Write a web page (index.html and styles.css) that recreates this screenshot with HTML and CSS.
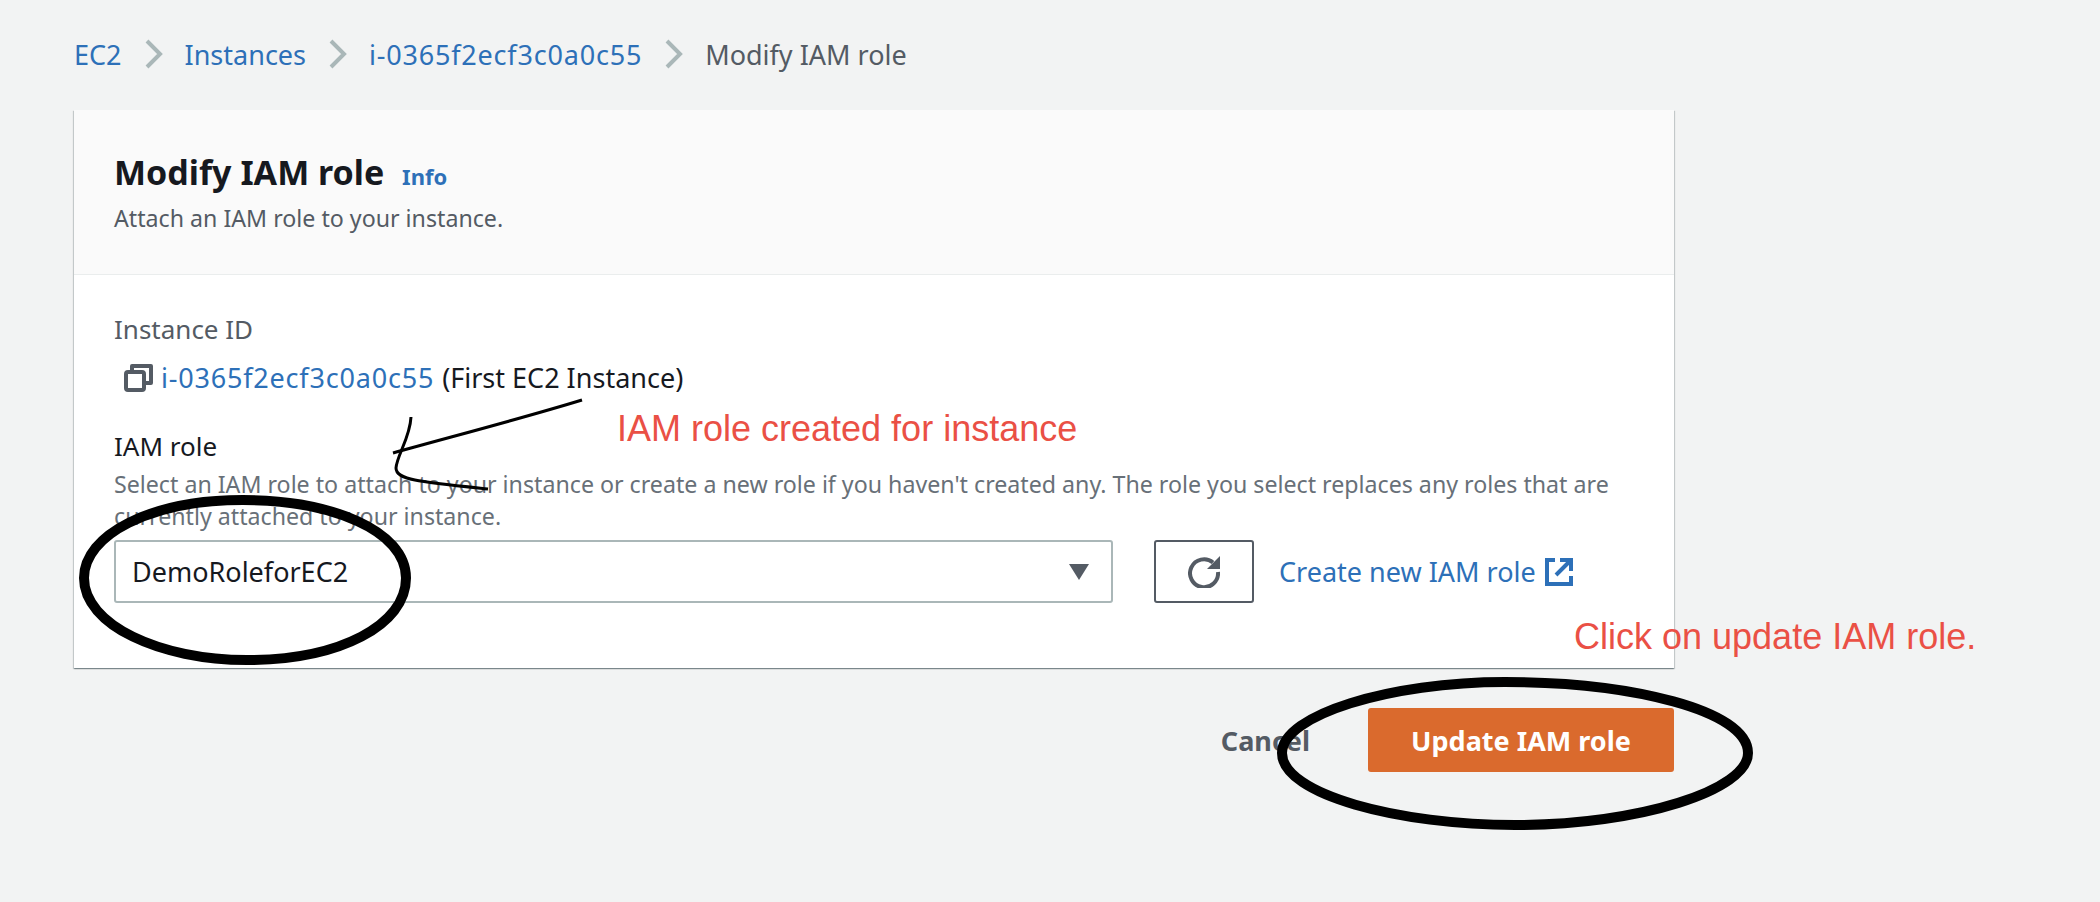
FILE: index.html
```html
<!DOCTYPE html>
<html lang="en">
  <head>
    <meta charset="UTF-8" />
    <title>Modify IAM role</title>
    <link rel="stylesheet" href="styles.css">
  </head>
  <body>
    <nav class="crumbs">
      <a href="#">EC2</a>
      <svg class="chevron" viewBox="0 0 19 30"><path d="M3 2l13 13L3 28" /></svg>
      <a href="#">Instances</a>
      <svg class="chevron" viewBox="0 0 19 30"><path d="M3 2l13 13L3 28" /></svg>
      <a href="#" class="id">i-0365f2ecf3c0a0c55</a>
      <svg class="chevron" viewBox="0 0 19 30"><path d="M3 2l13 13L3 28" /></svg>
      <span>Modify IAM role</span>
    </nav>
    <main class="card">
      <header class="card-head">
        <h1>Modify IAM role <a href="#" class="info">Info</a></h1>
        <p>Attach an IAM role to your instance.</p>
      </header>
      <div class="card-body">
        <div class="label muted">Instance ID</div>
        <div class="instance">
          <svg class="copy" viewBox="0 0 29 28">
            <rect x="2" y="8" width="18" height="18" rx="2" />
            <path d="M8 7V2h19v17h-6" />
          </svg>
          <a href="#" class="id">i-0365f2ecf3c0a0c55</a>
          <span>(First EC2 Instance)</span>
        </div>
        <div class="label role-label">IAM role</div>
        <p class="hint">Select an IAM role to attach to your instance or create a new role if you haven't created any. The role you select replaces any roles that are currently attached to your instance.</p>
        <div class="role-row">
          <div class="select">
            <span>DemoRoleforEC2</span>
            <i class="caret"></i>
          </div>
          <button class="refresh">
            <svg viewBox="0 0 32 32"><path d="M25 6.5A14 14 0 1 0 30 16" /><path class="fill" d="M32 0v13H19z" /></svg>
          </button>
          <a href="#" class="create">Create new IAM role
            <svg viewBox="0 0 28 28"><path d="M10 2H2v24h24v-8" /><path d="M15 2h11v11M25 3L11 17" /></svg>
          </a>
        </div>
      </div>
    </main>
    <div class="actions">
      <button class="cancel">Cancel</button>
      <button class="update">Update IAM role</button>
    </div>

    <!-- annotations drawn on top of the screenshot -->
    <svg class="marks" viewBox="0 0 2100 902">
      <path d="M243 500C330 500 406 530 406 578C406 625 340 660 247 660C160 660 84 625 84 578C84 535 150 500 243 500Z" />
      <path d="M1505 682C1630 682 1748 710 1748 753C1748 790 1640 825 1515 825C1400 825 1282 795 1282 753C1282 715 1390 682 1505 682Z" />
      <path class="thin" d="M582 400C520 419 450 437 393 453" />
      <path class="thin" d="M411 417C410 438 397 455 396 468C396 480 420 482 488 489" />
    </svg>
    <div class="note note-role">IAM role created for instance</div>
    <div class="note note-update">Click on update IAM role.</div>
  </body>
</html>
```

FILE: styles.css
```css
* {
  box-sizing: border-box;
}

body {
  margin: 0;
  width: 2100px;
  height: 902px;
  overflow: hidden;
  padding: 0 0 0 74px;
  background-color: #f2f3f3;
  color: #16191f;
  font-family: "Noto Sans", sans-serif;
  font-size: 27px;
}

a {
  color: #2d70b8;
  text-decoration: none;
}

.id {
  letter-spacing: 0.8px;
}

.crumbs {
  display: flex;
  align-items: center;
  height: 110px;
  padding-bottom: 2px;
  gap: 22px;
  color: #545b64;
}

.chevron {
  width: 19px;
  height: 30px;
  fill: none;
  stroke: #aab7b8;
  stroke-width: 4;
}

.card {
  width: 1600px;
  height: 558px;
  background-color: #fff;
  box-shadow: 0 1px 1px 0 rgba(0, 28, 36, 0.3), 1px 1px 1px 0 rgba(0, 28, 36, 0.15), -1px 1px 1px 0 rgba(0, 28, 36, 0.15);
}

.card-head {
  height: 165px;
  padding: 39px 40px 0;
  background-color: #fafafa;
  border-bottom: 1px solid #eaeded;
}

.card-head h1 {
  margin: 0;
  font-size: 34px;
  line-height: 46px;
  font-weight: 700;
}

.info {
  margin-left: 9px;
  font-size: 22px;
  font-weight: 700;
}

.card-head p {
  margin: 3px 0 0;
  font-size: 23.2px;
  line-height: 32px;
  color: #545b64;
}

.card-body {
  padding: 36px 40px 0;
}

.label {
  font-size: 26px;
  line-height: 36px;
}

.muted {
  color: #545b64;
}

.instance {
  display: flex;
  align-items: center;
  gap: 8px;
  margin-top: 13px;
  padding-left: 10px;
  line-height: 36px;
}

.copy {
  width: 29px;
  height: 28px;
  fill: none;
  stroke: #545b64;
  stroke-width: 4;
  stroke-linejoin: round;
}

.role-label {
  margin-top: 32px;
}

.hint {
  margin: 4px 0 0;
  font-size: 23.2px;
  line-height: 32px;
  color: #687078;
}

.role-row {
  display: flex;
  align-items: center;
  margin-top: 8px;
}

.select {
  display: flex;
  align-items: center;
  justify-content: space-between;
  width: 999px;
  height: 63px;
  padding: 0 22px 0 16px;
  background-color: #fff;
  border: 2px solid #aab7b8;
  border-radius: 3px;
}

.caret {
  width: 0;
  height: 0;
  border-left: 10px solid transparent;
  border-right: 10px solid transparent;
  border-top: 16px solid #545b64;
}

.refresh {
  display: flex;
  align-items: center;
  justify-content: center;
  width: 100px;
  height: 63px;
  margin-left: 41px;
  padding: 0;
  background-color: #fff;
  border: 2px solid #545b64;
  border-radius: 3px;
}

.refresh svg {
  width: 32px;
  height: 32px;
  fill: none;
  stroke: #545b64;
  stroke-width: 4;
}

.refresh .fill {
  fill: #545b64;
  stroke: none;
}

.create {
  display: flex;
  align-items: center;
  gap: 9px;
  margin-left: 25px;
}

.create svg {
  width: 28px;
  height: 28px;
  fill: none;
  stroke: #2d70b8;
  stroke-width: 4;
}

.actions {
  display: flex;
  align-items: center;
  justify-content: flex-end;
  gap: 58px;
  width: 1600px;
  margin-top: 40px;
}

.actions button {
  border: none;
  font: inherit;
  font-weight: 700;
}

.cancel {
  padding: 0;
  color: #545b64;
  background: none;
}

.update {
  width: 306px;
  height: 64px;
  color: #fff;
  background-color: #da6a2d;
  border-radius: 3px;
}

.marks {
  position: absolute;
  left: 0;
  top: 0;
  width: 2100px;
  height: 902px;
  fill: none;
  stroke: #000;
  stroke-width: 10;
}

.marks .thin {
  stroke-width: 3;
}

.note {
  position: absolute;
  font-family: "Liberation Sans", sans-serif;
  font-size: 36px;
  line-height: 42px;
  color: #ea5045;
  white-space: nowrap;
}

.note-role {
  left: 617px;
  top: 408px;
}

.note-update {
  left: 1574px;
  top: 616px;
}
```
